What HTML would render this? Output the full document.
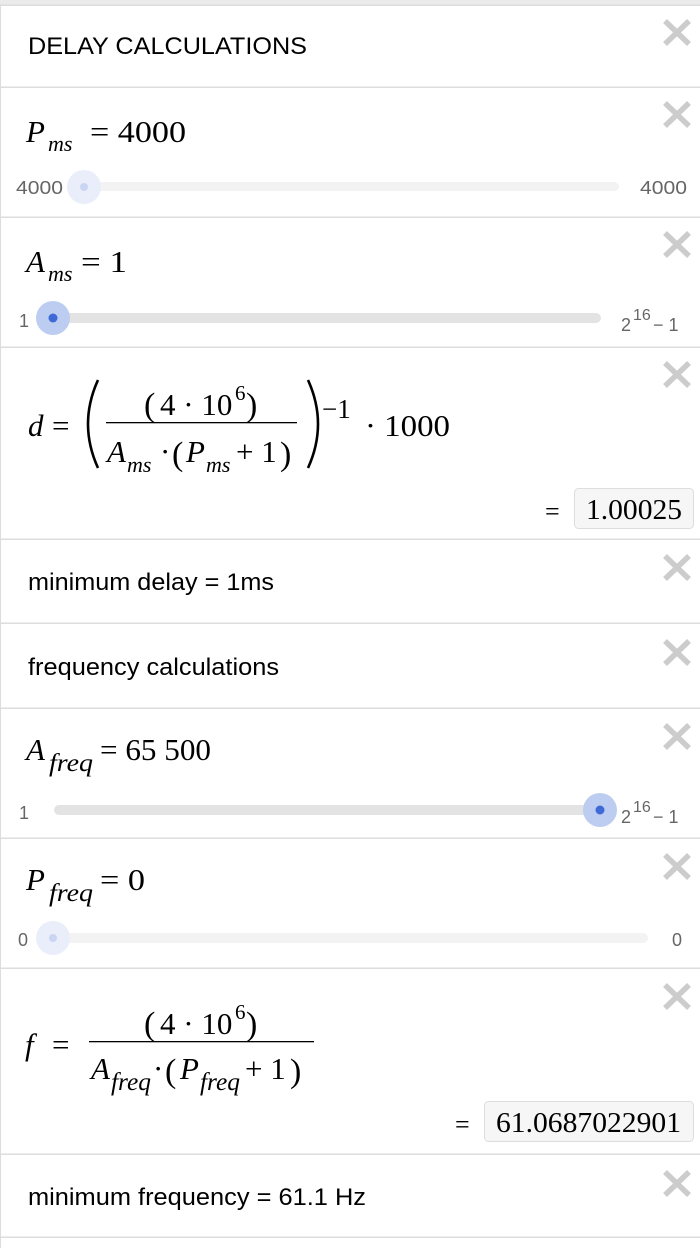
<!DOCTYPE html>
<html><head><meta charset="utf-8"><style>
html,body{margin:0;padding:0;background:#fff;}
svg{display:block}
.s{font-family:"Liberation Sans",Arial,sans-serif;fill:#000;font-size:24px}
.m{font-family:"Liberation Serif","DejaVu Serif",serif;fill:#000;font-size:31px}
.i{font-style:italic}
.sub{font-size:22px}
.fq{font-size:25px}
.sup{font-size:21px}
.l{font-family:"Liberation Sans",Arial,sans-serif;fill:#666;font-size:18px}
.x line{stroke:#cccccc;stroke-width:5.5}
</style></head><body>
<svg width="700" height="1248" viewBox="0 0 700 1248" xmlns="http://www.w3.org/2000/svg">
<rect x="0" y="0" width="700" height="5" fill="#ebebeb"/>
<rect x="0" y="4.5" width="700" height="1.5" fill="#ddd"/>
<rect x="0" y="4" width="1" height="1244" fill="#ddd"/>
<g fill="#ddd">
<rect x="0" y="86.5" width="700" height="1.5"/>
<rect x="0" y="216.5" width="700" height="1.5"/>
<rect x="0" y="346.5" width="700" height="1.5"/>
<rect x="0" y="538.5" width="700" height="1.5"/>
<rect x="0" y="622.5" width="700" height="1.5"/>
<rect x="0" y="707.5" width="700" height="1.5"/>
<rect x="0" y="837.5" width="700" height="1.5"/>
<rect x="0" y="967.5" width="700" height="1.5"/>
<rect x="0" y="1153.5" width="700" height="1.5"/>
<rect x="0" y="1236.5" width="700" height="1.5"/>
</g>
<g class="x">
<g transform="translate(0,0)"><line x1="665" y1="21" x2="689" y2="44"/><line x1="689" y1="21" x2="665" y2="44"/></g>
<g transform="translate(0,82)"><line x1="665" y1="21" x2="689" y2="44"/><line x1="689" y1="21" x2="665" y2="44"/></g>
<g transform="translate(0,212)"><line x1="665" y1="21" x2="689" y2="44"/><line x1="689" y1="21" x2="665" y2="44"/></g>
<g transform="translate(0,342)"><line x1="665" y1="21" x2="689" y2="44"/><line x1="689" y1="21" x2="665" y2="44"/></g>
<g transform="translate(0,535)"><line x1="665" y1="21" x2="689" y2="44"/><line x1="689" y1="21" x2="665" y2="44"/></g>
<g transform="translate(0,620)"><line x1="665" y1="21" x2="689" y2="44"/><line x1="689" y1="21" x2="665" y2="44"/></g>
<g transform="translate(0,704)"><line x1="665" y1="21" x2="689" y2="44"/><line x1="689" y1="21" x2="665" y2="44"/></g>
<g transform="translate(0,834)"><line x1="665" y1="21" x2="689" y2="44"/><line x1="689" y1="21" x2="665" y2="44"/></g>
<g transform="translate(0,964)"><line x1="665" y1="21" x2="689" y2="44"/><line x1="689" y1="21" x2="665" y2="44"/></g>
<g transform="translate(0,1151)"><line x1="665" y1="21" x2="689" y2="44"/><line x1="689" y1="21" x2="665" y2="44"/></g>
</g>

<text class="s" x="28" y="54" textLength="279" lengthAdjust="spacingAndGlyphs">DELAY CALCULATIONS</text>

<text class="m i" x="26" y="142">P</text>
<text class="m i sub" x="48" y="151">ms</text>
<text class="m" x="90" y="142" textLength="96" lengthAdjust="spacingAndGlyphs">= 4000</text>
<rect x="80" y="182" width="539" height="9" rx="4.5" fill="#f3f3f3"/>
<circle cx="84" cy="187" r="17" fill="#e9eefa"/>
<circle cx="84" cy="187" r="4" fill="#c9d5f2"/>
<text class="l" x="16" y="194" textLength="47" lengthAdjust="spacingAndGlyphs">4000</text>
<text class="l" x="640" y="194" textLength="47" lengthAdjust="spacingAndGlyphs">4000</text>

<text class="m i" x="26" y="272">A</text>
<text class="m i sub" x="48" y="281">ms</text>
<text class="m" x="81" y="272" textLength="46" lengthAdjust="spacingAndGlyphs">= 1</text>
<rect x="53" y="313" width="548" height="10" rx="5" fill="#e3e3e3"/>
<circle cx="53" cy="318" r="17" fill="#bccdf1"/>
<circle cx="53" cy="318" r="4.5" fill="#3f69d4"/>
<text class="l" x="19" y="327">1</text>
<text class="l" x="621" y="331">2</text>
<text class="l" x="633" y="320" style="font-size:16px">16</text>
<text class="l" x="653" y="331">− 1</text>

<text class="m i" x="28" y="436">d</text>
<text class="m" x="52" y="436">=</text>
<path d="M98,380 Q78,424 98,468" fill="none" stroke="#000" stroke-width="2.6"/>
<text class="m" x="144" y="416" style="font-size:34px">(</text>
<text class="m" x="160" y="415">4 · 10</text>
<text class="m sup" x="235" y="400">6</text>
<text class="m" x="246" y="416" style="font-size:34px">)</text>
<rect x="106" y="422" width="191" height="1.3" fill="#000"/>
<text class="m i" x="107" y="462">A</text>
<text class="m i sub" x="127" y="472">ms</text>
<text class="m" x="160" y="462">·</text>
<text class="m" x="172" y="465" style="font-size:34px">(</text>
<text class="m i" x="186" y="462">P</text>
<text class="m i sub" x="206" y="472">ms</text>
<text class="m" x="236" y="462">+ 1</text>
<text class="m" x="280" y="465" style="font-size:34px">)</text>
<path d="M308,380 Q328,424 308,468" fill="none" stroke="#000" stroke-width="2.6"/>
<text class="m" x="322" y="418" style="font-size:27px">−1</text>
<text class="m" x="365" y="436" textLength="85" lengthAdjust="spacingAndGlyphs">· 1000</text>
<text class="m" x="545" y="520" fill="#999" style="font-size:26px">=</text>
<rect x="574.5" y="488.5" width="119" height="40" rx="4" fill="#f6f6f6" stroke="#ddd"/>
<text class="m" x="586" y="519" style="font-size:28px" textLength="96" lengthAdjust="spacingAndGlyphs">1.00025</text>

<text class="s" x="28" y="590" textLength="246" lengthAdjust="spacingAndGlyphs">minimum delay = 1ms</text>
<text class="s" x="28" y="675" textLength="251" lengthAdjust="spacingAndGlyphs">frequency calculations</text>

<text class="m i" x="26" y="760">A</text>
<text class="m i fq" x="49" y="771" textLength="44" lengthAdjust="spacingAndGlyphs">freq</text>
<text class="m" x="100" y="760" textLength="111" lengthAdjust="spacingAndGlyphs">= 65 500</text>
<rect x="54" y="805" width="547" height="10" rx="5" fill="#e3e3e3"/>
<circle cx="600" cy="810" r="17" fill="#bccdf1"/>
<circle cx="600" cy="810" r="4.5" fill="#3f69d4"/>
<text class="l" x="19" y="819">1</text>
<text class="l" x="621" y="823">2</text>
<text class="l" x="633" y="812" style="font-size:16px">16</text>
<text class="l" x="653" y="823">− 1</text>

<text class="m i" x="26" y="890">P</text>
<text class="m i fq" x="49" y="901" textLength="44" lengthAdjust="spacingAndGlyphs">freq</text>
<text class="m" x="100" y="890" textLength="45" lengthAdjust="spacingAndGlyphs">= 0</text>
<rect x="48" y="933" width="600" height="10" rx="5" fill="#f3f3f3"/>
<circle cx="53" cy="938" r="17" fill="#e9eefa"/>
<circle cx="53" cy="938" r="4" fill="#c9d5f2"/>
<text class="l" x="18" y="946">0</text>
<text class="l" x="672" y="946">0</text>

<text class="m i" x="25" y="1055">f</text>
<text class="m" x="52" y="1055">=</text>
<text class="m" x="144" y="1035" style="font-size:34px">(</text>
<text class="m" x="160" y="1034">4 · 10</text>
<text class="m sup" x="235" y="1019">6</text>
<text class="m" x="246" y="1035" style="font-size:34px">)</text>
<rect x="89" y="1041" width="225" height="1.3" fill="#000"/>
<text class="m i" x="91" y="1079">A</text>
<text class="m i fq" x="111" y="1090" textLength="40" lengthAdjust="spacingAndGlyphs">freq</text>
<text class="m" x="153" y="1079">·</text>
<text class="m" x="165" y="1082" style="font-size:34px">(</text>
<text class="m i" x="180" y="1079">P</text>
<text class="m i fq" x="200" y="1090" textLength="40" lengthAdjust="spacingAndGlyphs">freq</text>
<text class="m" x="245" y="1079">+ 1</text>
<text class="m" x="290" y="1082" style="font-size:34px">)</text>
<text class="m" x="455" y="1133" fill="#999" style="font-size:26px">=</text>
<rect x="484.5" y="1101.5" width="209" height="40" rx="4" fill="#f6f6f6" stroke="#ddd"/>
<text class="m" x="496" y="1132" style="font-size:28px" textLength="185" lengthAdjust="spacingAndGlyphs">61.0687022901</text>

<text class="s" x="28" y="1205" textLength="338" lengthAdjust="spacingAndGlyphs">minimum frequency = 61.1 Hz</text>
</svg>
</body></html>
